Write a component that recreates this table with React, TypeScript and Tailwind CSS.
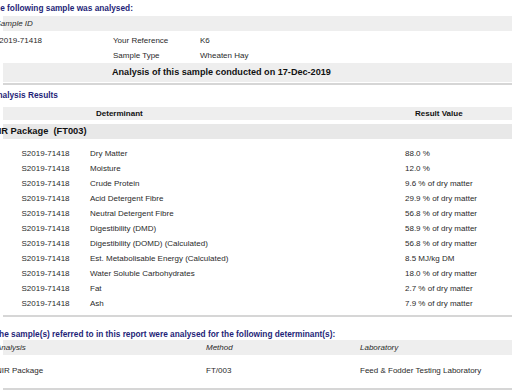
const rows: [string, string][] = [
  ['Dry Matter', '88.0 %'],
  ['Moisture', '12.0 %'],
  ['Crude Protein', '9.6 % of dry matter'],
  ['Acid Detergent Fibre', '29.9 % of dry matter'],
  ['Neutral Detergent Fibre', '56.8 % of dry matter'],
  ['Digestibility (DMD)', '58.9 % of dry matter'],
  ['Digestibility (DOMD) (Calculated)', '56.8 % of dry matter'],
  ['Est. Metabolisable Energy (Calculated)', '8.5 MJ/kg DM'],
  ['Water Soluble Carbohydrates', '18.0 % of dry matter'],
  ['Fat', '2.7 % of dry matter'],
  ['Ash', '7.9 % of dry matter'],
];

const Heading = ({ text, className }: { text: string; className: string }) => (
  <div
    className={`whitespace-nowrap font-bold text-[8.3px] text-[#1f1f78] ${className}`}
  >
    {text}
  </div>
);

export default function App() {
  return (
    <div className="w-[514px] h-[391px] overflow-hidden bg-white font-['Liberation_Sans',Arial,sans-serif] text-[8px] text-[#2a2a2a]">
      <Heading text="The following sample was analysed:" className="-ml-[10px] h-[16px] leading-[16px]" />

      {/* sample block */}
      <div className="ml-[3px] mr-[2px] h-[15px] bg-[#eeeeee] flex items-center">
        <span className="-ml-[7.5px] italic">Sample ID</span>
      </div>
      <div className="-ml-[6px] mt-[2px] flex h-[15px] items-center whitespace-nowrap">
        <div className="w-[119px]">S2019-71418</div>
        <div className="w-[87px]">Your Reference</div>
        <div>K6</div>
      </div>
      <div className="-ml-[6px] flex h-[15px] items-center whitespace-nowrap">
        <div className="w-[119px]" />
        <div className="w-[87px]">Sample Type</div>
        <div>Wheaten Hay</div>
      </div>
      <div className="ml-[3px] mr-[2px] h-[19px] bg-[#eeeeee] flex items-center pl-[109px] font-bold text-[9.1px] text-[#111]">
        Analysis of this sample conducted on 17-Dec-2019
      </div>
      <div className="ml-[3px] mr-[2px] mt-[1px] h-[2px] bg-[#d6d6d6]" />

      {/* results */}
      <Heading text="Analysis Results" className="-ml-[8.5px] mt-[2px] h-[16px] leading-[16px]" />
      <div className="ml-[3px] mr-[2px] mt-[4px] h-[13px] bg-[#eeeeee] flex items-center font-bold text-[#111] whitespace-nowrap">
        <div className="w-[401px] pl-[93px]">Determinant</div>
        <div className="pl-[11px]">Result Value</div>
      </div>
      <div className="ml-[3px] mr-[2px] mt-[4px] h-[15px] bg-[#e8e8e8] flex items-center font-bold text-[9.3px] text-[#111] whitespace-nowrap">
        <span className="-ml-[11px]">NIR Package&nbsp; (FT003)</span>
      </div>
      <div className="mt-[7px]">
        {rows.map(([name, value]) => (
          <div key={name} className="flex h-[15px] items-center whitespace-nowrap">
            <div className="w-[90px] pl-[21.5px]">S2019-71418</div>
            <div className="w-[315px]">{name}</div>
            <div>{value}</div>
          </div>
        ))}
      </div>
      <div className="ml-[3px] mr-[2px] mt-[4px] h-[2px] bg-[#d6d6d6]" />

      {/* methods */}
      <Heading
        text="The sample(s) referred to in this report were analysed for the following determinant(s):"
        className="-ml-[6px] mt-[12px] h-[11px] leading-[11px]"
      />
      <div className="ml-[3px] mr-[2px] h-[15px] bg-[#eeeeee] flex items-center italic whitespace-nowrap">
        <div className="-ml-[7px] w-[210px]">Analysis</div>
        <div className="w-[154px]">Method</div>
        <div>Laboratory</div>
      </div>
      <div className="flex h-[31px] items-center whitespace-nowrap">
        <div className="-ml-[4px] w-[210px]">NIR Package</div>
        <div className="w-[154px]">FT/003</div>
        <div>Feed &amp; Fodder Testing Laboratory</div>
      </div>
      <div className="ml-[3px] mr-[2px] mt-[2px] h-[2px] bg-[#d6d6d6]" />
    </div>
  );
}
